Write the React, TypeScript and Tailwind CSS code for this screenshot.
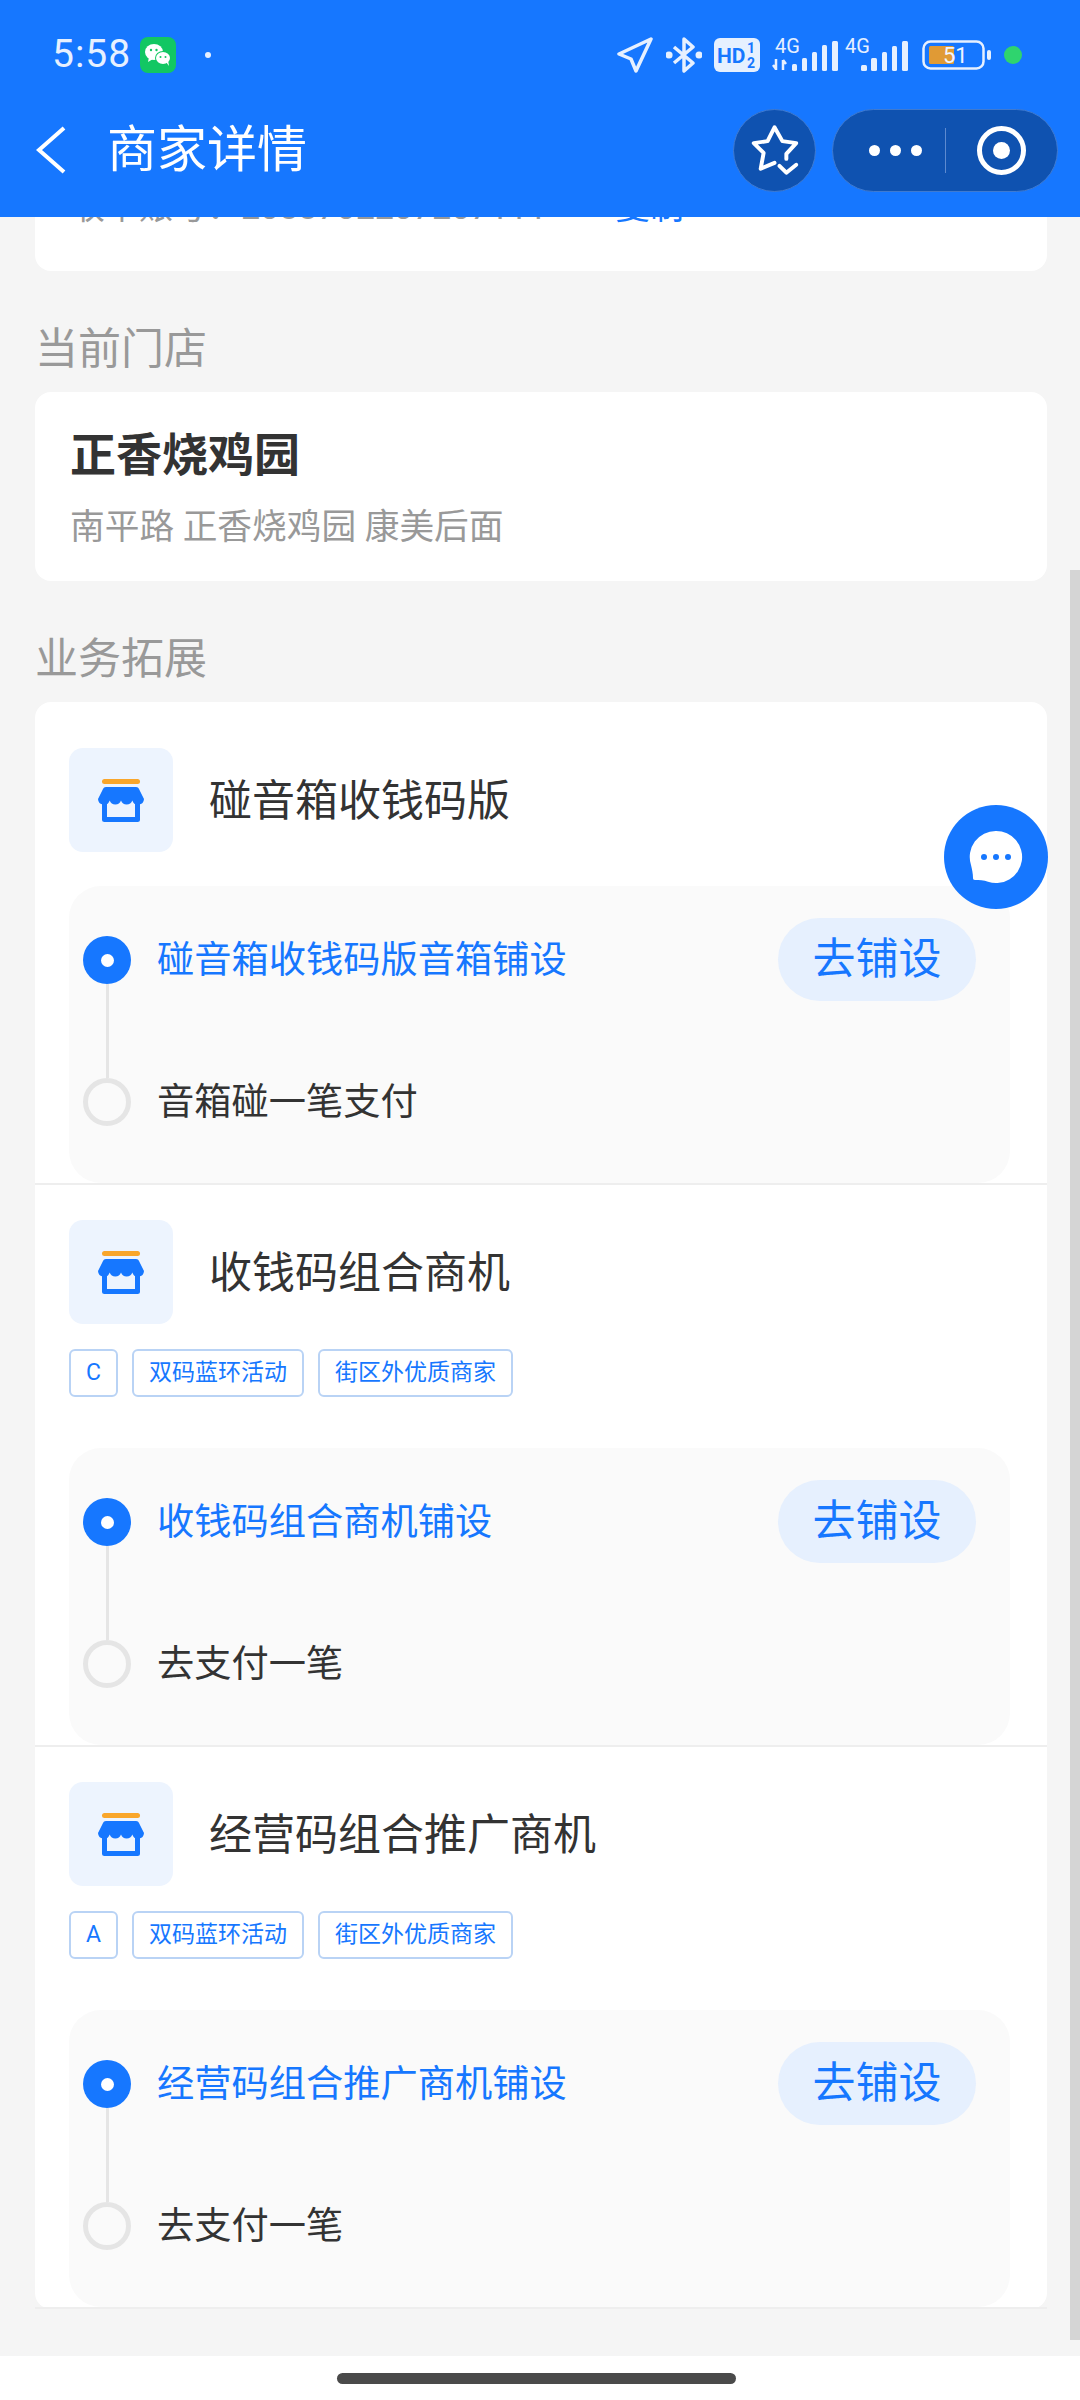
const storeTitle = "text-[43px] leading-[52px] text-[#333]";

function WeChatIcon() {
  return (
    <svg width="36" height="36" viewBox="0 0 36 36">
      <rect width="36" height="36" rx="8" fill="#12c763" />
      <ellipse cx="14" cy="15" rx="9" ry="8" fill="#fff" />
      <path d="M9 20l-1 5 5-3z" fill="#fff" />
      <ellipse cx="23" cy="21" rx="8" ry="7" fill="#12c763" />
      <ellipse cx="23" cy="21" rx="7" ry="6" fill="#fff" />
      <path d="M26 25l3 4-1-6z" fill="#fff" />
      <circle cx="11" cy="13" r="1.2" fill="#12c763" />
      <circle cx="16.5" cy="13" r="1.2" fill="#12c763" />
      <circle cx="20.5" cy="20" r="1" fill="#12c763" />
      <circle cx="25.5" cy="20" r="1" fill="#12c763" />
    </svg>
  );
}

function StatusIcons() {
  return (
    <div className="ml-auto flex items-center pr-[58px]">
      <svg width="36" height="36" viewBox="0 0 36 36" fill="none" stroke="#e6f0ff" strokeWidth="3.5" strokeLinejoin="round">
        <path d="M34 2L2 17l12 5 5 12z" />
      </svg>
      <svg className="ml-[13px]" width="36" height="36" viewBox="0 0 36 36" fill="none" stroke="#e6f0ff" strokeWidth="3.5" strokeLinejoin="round">
        <path d="M8 10l19 16-9 8V2l9 8L8 26" />
        <path d="M3 18h.1M33 18h.1" strokeWidth="7" strokeLinecap="round" />
      </svg>
      <svg className="ml-[12px]" width="46" height="34" viewBox="0 0 46 34">
        <rect width="46" height="34" rx="6" fill="#e6f0ff" />
        <text x="3" y="25" fontSize="21" fontWeight="700" fill="#1677ff" fontFamily="Roboto, sans-serif">HD</text>
        <text x="33" y="15" fontSize="14" fontWeight="700" fill="#1677ff" fontFamily="Roboto, sans-serif">1</text>
        <text x="33" y="30" fontSize="14" fontWeight="700" fill="#1677ff" fontFamily="Roboto, sans-serif">2</text>
      </svg>
      <svg className="ml-[12px] overflow-visible" width="66" height="34" viewBox="0 0 66 34" fill="#e6f0ff">
        <text x="3" y="15" fontSize="20" fontFamily="Roboto, sans-serif">4G</text>
        <path d="M4 21v11M1 27l3 4M11 22v10M14 26l-3-4" stroke="#e6f0ff" strokeWidth="2.5" fill="none" />
        <rect x="20" y="26" width="5" height="7" rx="1.5" />
        <rect x="30" y="20" width="5" height="13" rx="1.5" />
        <rect x="40" y="14" width="5" height="19" rx="1.5" />
        <rect x="50" y="7" width="5" height="26" rx="1.5" />
        <rect x="60" y="3" width="6" height="30" rx="1.5" />
      </svg>
      <svg className="ml-[7px] overflow-visible" width="63" height="34" viewBox="0 0 63 34" fill="#e6f0ff">
        <text x="0" y="15" fontSize="20" fontFamily="Roboto, sans-serif">4G</text>
        <rect x="16" y="27" width="6" height="6" rx="1.5" />
        <rect x="26" y="20" width="6" height="13" rx="1.5" />
        <rect x="37" y="14" width="5" height="19" rx="1.5" />
        <rect x="47" y="8" width="5" height="25" rx="1.5" />
        <rect x="57" y="3" width="6" height="30" rx="1.5" />
      </svg>
      <svg className="ml-[14px]" width="69" height="30" viewBox="0 0 69 30">
        <rect x="1.5" y="1.5" width="60" height="27" rx="7" fill="none" stroke="#e6f0ff" strokeWidth="2.5" />
        <rect x="7" y="6" width="25" height="18" rx="1.5" fill="#e09a35" />
        <text x="21" y="23" fontSize="22" fill="#f0f5ff" fontFamily="Roboto, sans-serif">51</text>
        <rect x="65" y="10" width="4" height="10" rx="2" fill="#e6f0ff" />
      </svg>
      <div className="ml-[13px] h-[18px] w-[18px] rounded-full bg-[#2fd46e]" />
    </div>
  );
}

function StoreIcon() {
  return (
    <svg width="48" height="43" viewBox="0 0 48 43">
      <rect x="5" y="0" width="38" height="5" rx="2.5" fill="#f9a62b" />
      <path d="M9 8h30c1.5 0 2.500.8 3 2l5 10a6 6 0 0 1-11.7 1.5a6 6 0 0 1-11.3 0a6 6 0 0 1-11.3 0A6 6 0 0 1 1 20l5-10c.5-1.200 1.500-2 3-2z" fill="#1677ff" />
      <path d="M7.500 24v16.500h33V24" fill="none" stroke="#1677ff" strokeWidth="5" strokeLinejoin="round" />
    </svg>
  );
}

function Bullet({ active }: { active: boolean }) {
  if (active) {
    return (
      <div className="flex h-[48px] w-[48px] shrink-0 items-center justify-center rounded-full bg-[#1677ff]">
        <div className="h-[13px] w-[13px] rounded-full bg-white" />
      </div>
    );
  }
  return <div className="h-[48px] w-[48px] shrink-0 rounded-full border-[5px] border-[#e5e5e5]" />;
}

function Block({
  title,
  tags,
  step1,
  step2,
  first,
}: {
  title: string;
  tags?: string[];
  step1: string;
  step2: string;
  first?: boolean;
}) {
  return (
    <div className={`border-b-2 border-[#eeeeee] pl-[34px] pr-[37px] ${first ? "pt-[46px]" : "pt-[35px]"}`}>
      <div className="flex items-center">
        <div className="flex h-[104px] w-[104px] items-center justify-center rounded-[14px] bg-[#edf4fe]">
          <StoreIcon />
        </div>
        <div className={`ml-[36px] mt-[1px] ${storeTitle}`}>{title}</div>
      </div>
      {tags ? (
        <div className="mt-[25px] flex gap-[14px]">
          {tags.map((t, i) => (
            <div
              key={t}
              className={`flex h-[48px] items-center justify-center rounded-[6px] border-2 border-[#b9d3f5] text-[23px] text-[#1677ff] ${
                i === 0 ? "w-[49px]" : "px-[15px]"
              }`}
            >
              {t}
            </div>
          ))}
        </div>
      ) : null}
      <div className={`flex h-[297px] rounded-[32px] bg-[#fafafa] pl-[14px] pr-[34px] ${tags ? "mt-[51px]" : "mt-[34px]"}`}>
        <div className="flex w-[48px] flex-col items-center pt-[50px]">
          <Bullet active />
          <div className="h-[94px] w-[3px] bg-[#e5e5e5]" />
          <Bullet active={false} />
        </div>
        <div className="ml-[26px] flex-1">
          <div className="mt-[32px] flex h-[83px] items-center justify-between">
            <div className="text-[37.25px] leading-[48px] text-[#1677ff]">{step1}</div>
            <div className="flex h-[83px] w-[198px] items-center justify-center rounded-full bg-[#e6f0fe] text-[43px] text-[#1677ff]">
              去铺设
            </div>
          </div>
          <div className="mt-[77px] flex h-[48px] items-center text-[37.25px] leading-[48px] text-[#333]">{step2}</div>
        </div>
      </div>
    </div>
  );
}

export default function App() {
  return (
    <div className="relative flex h-[2400px] w-[1080px] flex-col overflow-hidden bg-[#f5f5f5] font-['Roboto','Noto_Sans_CJK_SC',sans-serif]">
      <header className="relative z-10 h-[217px] bg-[#1677ff]">
        <div className="flex h-[109px] items-center pl-[52px]">
          <span className="text-[39px] tracking-[1px] text-[#e6f0ff]">5:58</span>
          <div className="ml-[9px]">
            <WeChatIcon />
          </div>
          <div className="ml-[29px] h-[6px] w-[6px] rounded-full bg-[#e6f0ff]" />
          <StatusIcons />
        </div>
        <div className="flex h-[82px] items-center pl-[36px] pr-[22px]">
          <svg width="30" height="48" viewBox="0 0 30 48" fill="none" stroke="#fff" strokeWidth="4">
            <path d="M28 2L3 24l25 22" />
          </svg>
          <div className="ml-[41px] text-[50px] leading-[60px] text-white">商家详情</div>
          <div className="ml-auto flex h-[83px] w-[83px] items-center justify-center rounded-full border border-[#3f7ad0] bg-[#0f52b0]">
            <svg width="82" height="82" viewBox="0 0 82 82" fill="none" stroke="#fff" strokeWidth="4" strokeLinecap="round" strokeLinejoin="round">
              <path d="M41 54L27 60l3-16-10-10 14-2 7-14 8 14 14 2-10 11v5" />
              <path d="M46 57l7 7 10-8" />
            </svg>
          </div>
          <div className="ml-[16px] flex h-[83px] w-[226px] items-center rounded-full border border-[#3f7ad0] bg-[#0f52b0] pl-[36px]">
            <div className="flex gap-[10px]">
              <div className="h-[11px] w-[11px] rounded-full bg-white" />
              <div className="h-[11px] w-[11px] rounded-full bg-white" />
              <div className="h-[11px] w-[11px] rounded-full bg-white" />
            </div>
            <div className="ml-[23px] h-[45px] w-px bg-[#5d8ad0]" />
            <svg className="ml-[31px]" width="49" height="49" viewBox="0 0 49 49">
              <circle cx="24.500" cy="24.500" r="22" fill="none" stroke="#fff" strokeWidth="5" />
              <circle cx="24.500" cy="24.500" r="8.500" fill="#fff" />
            </svg>
          </div>
        </div>
      </header>

      <div className="ml-[35px] mr-[33px] h-[54px] overflow-hidden rounded-b-[16px] bg-white pl-[36px]">
        <div className="-mt-[30px] flex text-[34px] leading-[40px] text-[#999]">
          <span>收单账号：2088702207207111</span>
          <span className="ml-[69px] text-[#1677ff]">复制</span>
        </div>
      </div>

      <div className="mx-[35px] mt-[58px] mb-[23px] text-[43px] leading-[40px] text-[#999]">当前门店</div>
      <div className="ml-[35px] mr-[33px] h-[189px] rounded-[16px] bg-white px-[35px] pt-[40px]">
        <div className="text-[46px] font-bold leading-[46px] text-[#333]">正香烧鸡园</div>
        <div className="mt-[29px] text-[34.7px] leading-[40px] text-[#999]">南平路 正香烧鸡园 康美后面</div>
      </div>

      <div className="mx-[35px] mt-[58px] mb-[23px] text-[43px] leading-[40px] text-[#999]">业务拓展</div>
      <div className="ml-[35px] mr-[33px] rounded-[16px] bg-white">
        <Block first title="碰音箱收钱码版" step1="碰音箱收钱码版音箱铺设" step2="音箱碰一笔支付" />
        <Block title="收钱码组合商机" tags={["C", "双码蓝环活动", "街区外优质商家"]} step1="收钱码组合商机铺设" step2="去支付一笔" />
        <Block title="经营码组合推广商机" tags={["A", "双码蓝环活动", "街区外优质商家"]} step1="经营码组合推广商机铺设" step2="去支付一笔" />
      </div>

      <div className="mt-auto flex h-[44px] items-center justify-center bg-white pr-[8px]">
        <div className="h-[11px] w-[399px] rounded-full bg-[#4a4a4a]" />
      </div>

      {/* floating bits */}
      <div className="absolute left-[1070px] top-[570px] h-[1770px] w-[10px] bg-[#d5d5d5]" />
      <div className="absolute left-[944px] top-[805px] flex h-[104px] w-[104px] items-center justify-center rounded-full bg-[#1677ff]">
        <svg width="56" height="56" viewBox="0 0 56 56">
          <path d="M28 2a26 26 0 1 1-8 50.700C16 51 11 51 7 51c-1.500 0-2-1-2-2 0-4-1-9-2-13A26 26 0 0 1 28 2z" fill="#fff" />
          <circle cx="16" cy="28" r="3" fill="#1677ff" />
          <circle cx="28" cy="28" r="3" fill="#1677ff" />
          <circle cx="40" cy="28" r="3" fill="#1677ff" />
        </svg>
      </div>
    </div>
  );
}
